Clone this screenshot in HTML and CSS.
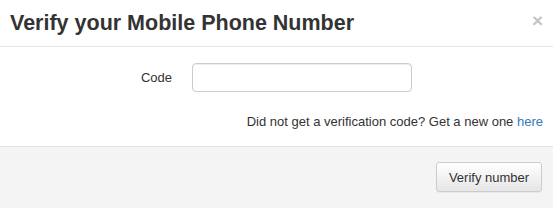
FILE: index.html
```html
<!DOCTYPE html>
<html lang="en">
<head>
<meta charset="UTF-8">
<meta name="viewport" content="width=device-width, initial-scale=1.0">
<title>Verify your Mobile Phone Number</title>
<link rel="stylesheet" href="styles.css">
</head>
<body>
    <div class="modal">
        <div class="modal-header">
            <h4 class="modal-title">Verify your Mobile Phone Number</h4>
            <button class="close" type="button">&times;</button>
        </div>
        <div class="modal-body">
            <div class="form-row">
                <label class="form-label" for="code">Code</label>
                <input class="form-control" type="text" id="code">
            </div>
            <p class="help">Did not get a verification code? Get a new one <a href="#">here</a></p>
        </div>
        <div class="modal-footer">
            <button class="btn" type="button">Verify number</button>
        </div>
    </div>
</body>
</html>
```

FILE: styles.css
```css
body {
    margin: 0;
    padding: 0;
    font-family: "Liberation Sans", Arial, sans-serif;
    font-size: 13px;
    color: #333;
    background: #fff;
}
.modal {
    width: 553px;
    height: 208px;
    display: flex;
    flex-direction: column;
}
.modal-header {
    height: 46px;
    padding: 0 10px;
    display: flex;
    align-items: center;
    justify-content: space-between;
    border-bottom: 1px solid #e5e5e5;
}
.modal-title {
    margin: 0;
    font-size: 21.5px;
    font-weight: bold;
    color: #333;
}
.close {
    border: none;
    background: none;
    padding: 0;
    margin-top: -4px;
    font-size: 19px;
    font-weight: bold;
    color: #c4c4c4;
    cursor: pointer;
    font-family: "Liberation Sans", Arial, sans-serif;
}
.modal-body {
    padding: 16px 10px 0 10px;
    height: 83px;
}
.form-row {
    display: grid;
    grid-template-columns: 162px 220px;
    column-gap: 20px;
    align-items: center;
}
.form-label {
    text-align: right;
}
.form-control {
    box-sizing: border-box;
    height: 29px;
    width: 220px;
    margin: 0;
    border: 1px solid #ccc;
    border-radius: 4px;
    box-shadow: inset 0 1px 1px rgba(0,0,0,0.075);
    padding: 4px 8px;
}
.help {
    margin: 22px 0 0 0;
    text-align: right;
}
.help a {
    color: #337ab7;
    text-decoration: none;
}
.modal-footer {
    flex: 1;
    background: #f4f4f4;
    border-top: 1px solid #e5e5e5;
    padding: 15px 11px 0 10px;
    display: flex;
    justify-content: flex-end;
    align-items: flex-start;
}
.btn {
    box-sizing: border-box;
    width: 106px;
    height: 30px;
    font-family: "Liberation Sans", Arial, sans-serif;
    font-size: 13px;
    color: #333;
    border: 1px solid #ccc;
    border-radius: 3px;
    background: linear-gradient(#fff, #e6e6e6);
    box-shadow: 0 1px 1px rgba(0,0,0,0.05);
    cursor: pointer;
}
```
